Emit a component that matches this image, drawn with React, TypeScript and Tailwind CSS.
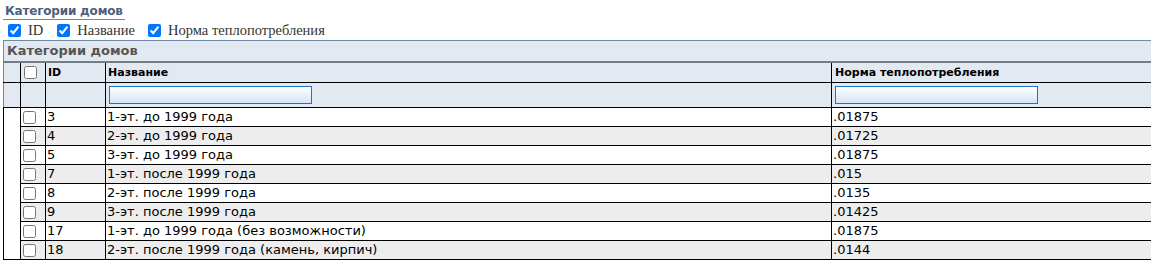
import React from "react";

const rows = [
  { id: "3", name: "1-эт. до 1999 года", norm: ".01875" },
  { id: "4", name: "2-эт. до 1999 года", norm: ".01725" },
  { id: "5", name: "3-эт. до 1999 года", norm: ".01875" },
  { id: "7", name: "1-эт. после 1999 года", norm: ".015" },
  { id: "8", name: "2-эт. после 1999 года", norm: ".0135" },
  { id: "9", name: "3-эт. после 1999 года", norm: ".01425" },
  { id: "17", name: "1-эт. до 1999 года (без возможности)", norm: ".01875" },
  { id: "18", name: "2-эт. после 1999 года (камень, кирпич)", norm: ".0144" },
];

const cols = "grid grid-cols-[17px_25px_60px_726px_1fr]";

function FilterInput() {
  return (
    <input
      type="text"
      className="block h-[18px] w-[203px] border border-[#1f74c6] bg-gradient-to-b from-white to-[#d2e5f7] outline-none"
    />
  );
}

export default function App() {
  return (
    <div className="min-h-screen bg-white font-['DejaVu_Sans',Verdana,sans-serif] text-black">
      <div className="flex h-[20px] items-end pl-[3px]">
        <span className="block border-b border-[#6f8aa9] px-[2px] text-[12px] font-bold leading-[16px] tracking-[-0.2px] text-[#4e5e7c]">
          Категории домов
        </span>
      </div>

      <div className="flex h-[20px] items-center pl-[8px] font-['Liberation_Serif',serif] text-[14.5px] leading-[20px] text-[#333]">
        <input type="checkbox" defaultChecked className="m-0 h-[13px] w-[13px]" />
        <span className="ml-[7px]">ID</span>
        <input type="checkbox" defaultChecked className="m-0 ml-[14px] h-[13px] w-[13px]" />
        <span className="ml-[7px]">Название</span>
        <input type="checkbox" defaultChecked className="m-0 ml-[13px] h-[13px] w-[13px]" />
        <span className="ml-[7px]">Норма теплопотребления</span>
      </div>

      <div className="ml-[3px]">
        <div className="h-[23px] border-l border-t border-b-2 border-l-[#7d8794] border-t-[#6f8aa9] border-b-[#747c86] bg-[#e3e9f1] pl-[3px] text-[13px] font-bold leading-[20px] text-[#555]">
          Категории домов
        </div>

        <div className={`${cols} h-[20px] border-b border-black bg-[#e3e9f1] text-[11px] font-bold leading-[19px]`}>
          <div className="border-l border-[#7d8794]" />
          <div className="flex items-center border-l border-black pl-[3px]">
            <input type="checkbox" className="m-0 h-[13px] w-[13px]" />
          </div>
          <div className="border-l border-black pl-[2px]">ID</div>
          <div className="border-l border-black pl-[2px]">Название</div>
          <div className="border-l border-black pl-[3px]">Норма теплопотребления</div>
        </div>

        <div className={`${cols} h-[25px] border-b border-black bg-[#e3e9f1]`}>
          <div className="border-l border-[#7d8794]" />
          <div className="border-l border-black" />
          <div className="border-l border-black" />
          <div className="border-l border-black pl-[3px] pt-[3px]">
            <FilterInput />
          </div>
          <div className="border-l border-black pl-[3px] pt-[3px]">
            <FilterInput />
          </div>
        </div>

        {rows.map((r, i) => {
          const last = i === rows.length - 1;
          const bg = i % 2 === 1 ? "bg-[#ededed]" : "bg-white";
          return (
            <div key={r.id} className={`${cols} h-[19px] text-[13px] leading-[18px]`}>
              <div className={`border-l border-black bg-white ${last ? "border-b" : ""}`} />
              <div className={`flex items-center border-l border-b border-black pl-[2px] ${bg}`}>
                <input type="checkbox" className="m-0 h-[13px] w-[13px]" />
              </div>
              <div className={`border-l border-b border-black pl-[1px] ${bg}`}>{r.id}</div>
              <div className={`border-l border-b border-black pl-[1px] ${bg}`}>{r.name}</div>
              <div className={`border-l border-b border-black pl-[1px] ${bg}`}>{r.norm}</div>
            </div>
          );
        })}
      </div>
    </div>
  );
}
